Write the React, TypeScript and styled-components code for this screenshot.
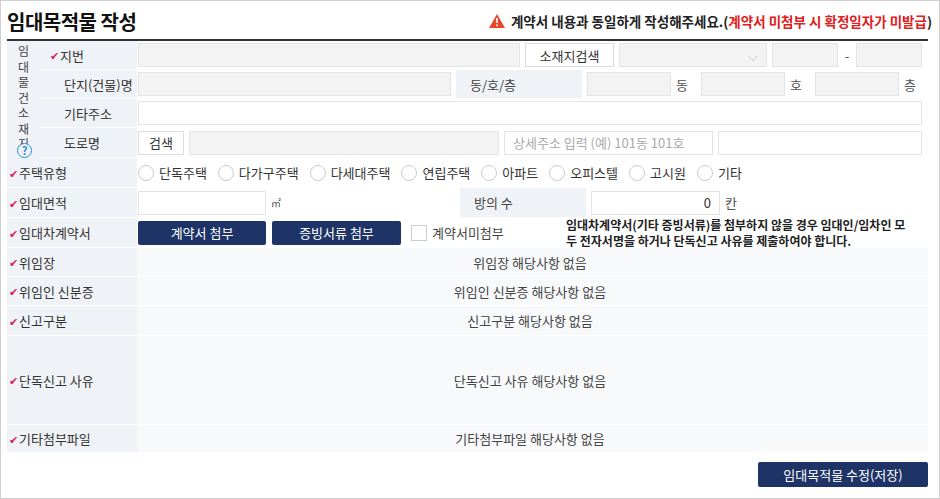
import React from "react";
import styled, { createGlobalStyle } from "styled-components";

const G = createGlobalStyle`
  html,body{margin:0;padding:0;background:#fff;}
  body{font-family:"Noto Sans CJK KR","Noto Sans",sans-serif;font-size:13px;color:#333;}
  *{box-sizing:border-box;}
`;
const Page = styled.div`
  width:940px;height:499px;border:1px solid #cfcfcf;padding:0 11px 0 6px;display:flex;flex-direction:column;
`;
const Head = styled.div`
  height:40px;display:flex;align-items:center;justify-content:space-between;border-bottom:2px solid #333;padding-top:2px;
`;
const Title = styled.h1`margin:0;font-size:20px;font-weight:700;color:#111;letter-spacing:-0.5px;`;
const Warn = styled.div`display:flex;align-items:center;gap:6px;font-size:13.5px;font-weight:700;color:#222;margin-right:-4px;`;
const Red = styled.span`color:#e0201c;`;
const Addr = styled.div`display:flex;`;
const VLabel = styled.div`
  width:33px;background:#eff2f6;display:flex;flex-direction:column;align-items:center;font-size:12px;line-height:15.5px;color:#444;padding-top:2px;position:relative;overflow:hidden;
`;
const Help = styled.div`
  position:absolute;bottom:0;left:10px;width:15px;height:15px;border:1.5px solid #2a8fd0;border-radius:50%;color:#2a8fd0;font-size:11px;line-height:12px;text-align:center;background:#eff2f6;font-weight:700;
`;
const Rows = styled.div`flex:1;display:flex;flex-direction:column;`;
const Row = styled.div<{ h?: number }>`
  display:flex;height:${p => p.h ?? 30}px;border-bottom:1px solid #fff;
`;
const Label = styled.div<{ w?: number }>`
  width:${p => p.w ?? 130}px;flex-shrink:0;background:#eff2f6;display:flex;align-items:center;padding-left:${p => (p.w ? 24 : 2)}px;font-size:13px;color:#333;
`;
const Chk = styled.span`color:#d6245a;font-size:11px;margin-right:1px;`;
const Cell = styled.div<{ grey?: boolean; center?: boolean }>`
  flex:1;display:flex;align-items:center;gap:5px;padding:0 6px 0 1px;background:${p => (p.grey ? "#f8f9fb" : "#fff")};
  justify-content:${p => (p.center ? "center" : "flex-start")};color:#444;
`;
const Input = styled.div<{ w?: number; white?: boolean; right?: boolean }>`
  ${p => (p.w ? `width:${p.w}px;flex-shrink:0;` : "flex:1;")}
  height:24px;border:1px solid #e4e4e4;background:${p => (p.white ? "#fff" : "#f3f3f3")};
  display:flex;align-items:center;justify-content:${p => (p.right ? "flex-end" : "flex-start")};padding:0 8px;color:#aaa;font-size:13px;
`;
const Btn = styled.div<{ w: number }>`
  width:${p => p.w}px;height:24px;border:1px solid #ddd;background:#fff;display:flex;align-items:center;justify-content:center;color:#333;flex-shrink:0;
`;
const Navy = styled.div<{ w: number }>`
  width:${p => p.w}px;height:24px;background:#1e3466;color:#fff;display:flex;align-items:center;justify-content:center;border-radius:2px;flex-shrink:0;font-size:13px;
`;
const SubLabel = styled.div`
  width:126px;align-self:stretch;background:#eff2f6;display:flex;align-items:center;padding-left:14px;flex-shrink:0;
`;
const Unit = styled.span`color:#555;width:20px;flex-shrink:0;font-size:13px;`;
const Radio = styled.label`display:flex;align-items:center;gap:5px;margin-right:6px;color:#333;`;
const Circle = styled.span`width:16px;height:16px;border:1px solid #ccc;border-radius:50%;background:#fff;`;
const Box = styled.span`width:16px;height:16px;border:1px solid #ccc;background:#fff;`;
const Note = styled.div`font-size:12px;font-weight:700;color:#222;line-height:16px;margin-left:auto;width:348px;margin-right:8px;`;
const Foot = styled.div`display:flex;justify-content:flex-end;padding-top:9px;`;

const radios = ["단독주택", "다가구주택", "다세대주택", "연립주택", "아파트", "오피스텔", "고시원", "기타"];
const rows2: [string, string, number][] = [
  ["위임장", "위임장 해당사항 없음", 29],
  ["위임인 신분증", "위임인 신분증 해당사항 없음", 29],
  ["신고구분", "신고구분 해당사항 없음", 30],
];

export default function App() {
  return (
    <>
      <G />
      <Page>
        <Head>
          <Title>임대목적물 작성</Title>
          <Warn>
            <svg width="16" height="14" viewBox="0 0 16 14"><path d="M8 0 L16 14 H0 Z" fill="#e5472c" /><rect x="7.2" y="4" width="1.6" height="5" fill="#fff" /><rect x="7.2" y="10.5" width="1.6" height="1.6" fill="#fff" /></svg>
            <span>계약서 내용과 동일하게 작성해주세요.(<Red>계약서 미첨부 시 확정일자가 미발급</Red>)</span>
          </Warn>
        </Head>
        <Addr>
          <VLabel>
            {"임대물건소재지".split("").map((c, i) => <span key={i}>{c}</span>)}
            <Help>?</Help>
          </VLabel>
          <Rows>
            <Row h={29}>
              <Label w={97}><Chk style={{ marginLeft: -14 }}>✔</Chk>지번</Label>
              <Cell>
                <Input />
                <Btn w={89}>소재지검색</Btn>
                <Input w={148} style={{ justifyContent: "flex-end", color: "#bbb" }}>⌵</Input>
                <Input w={66} />
                <Unit style={{ width: 8, textAlign: "center" }}>-</Unit>
                <Input w={66} />
              </Cell>
            </Row>
            <Row h={29}>
              <Label w={97}>단지(건물)명</Label>
              <Cell style={{ paddingRight: 4 }}>
                <Input w={313} />
                <SubLabel>동/호/층</SubLabel>
                <Input />
                <Unit>동</Unit>
                <Input />
                <Unit>호</Unit>
                <Input />
                <Unit>층</Unit>
              </Cell>
            </Row>
            <Row h={29}>
              <Label w={97}>기타주소</Label>
              <Cell><Input white /></Cell>
            </Row>
            <Row h={30}>
              <Label w={97}>도로명</Label>
              <Cell>
                <Btn w={46}>검색</Btn>
                <Input w={310} />
                <Input w={209} white>상세주소 입력 (예) 101동 101호</Input>
                <Input white />
              </Cell>
            </Row>
          </Rows>
        </Addr>
        <Row>
          <Label><Chk>✔</Chk>주택유형</Label>
          <Cell>{radios.map(r => <Radio key={r}><Circle />{r}</Radio>)}</Cell>
        </Row>
        <Row>
          <Label><Chk>✔</Chk>임대면적</Label>
          <Cell>
            <Input w={128} white />
            <Unit style={{ width: 184, fontSize: 10 }}>㎡</Unit>
            <SubLabel>방의 수</SubLabel>
            <Input w={129} white right style={{ color: "#333" }}>0</Input>
            <Unit>칸</Unit>
          </Cell>
        </Row>
        <Row>
          <Label><Chk>✔</Chk>임대차계약서</Label>
          <Cell>
            <Navy w={128}>계약서 첨부</Navy>
            <Navy w={129} style={{ marginLeft: 1 }}>증빙서류 첨부</Navy>
            <Box style={{ marginLeft: 5 }} />계약서미첨부
            <Note>임대차계약서(기타 증빙서류)를 첨부하지 않을 경우 임대인/임차인 모두 전자서명을 하거나 단독신고 사유를 제출하여야 합니다.</Note>
          </Cell>
        </Row>
        {rows2.map(([l, t, h]) => (
          <Row key={l} h={h}>
            <Label><Chk>✔</Chk>{l}</Label>
            <Cell grey center>{t}</Cell>
          </Row>
        ))}
        <Row h={89}>
          <Label><Chk>✔</Chk>단독신고 사유</Label>
          <Cell grey center>단독신고 사유 해당사항 없음</Cell>
        </Row>
        <Row h={28}>
          <Label><Chk>✔</Chk>기타첨부파일</Label>
          <Cell grey center>기타첨부파일 해당사항 없음</Cell>
        </Row>
        <Foot><Navy w={170} style={{ height: 25 }}>임대목적물 수정(저장)</Navy></Foot>
      </Page>
    </>
  );
}
